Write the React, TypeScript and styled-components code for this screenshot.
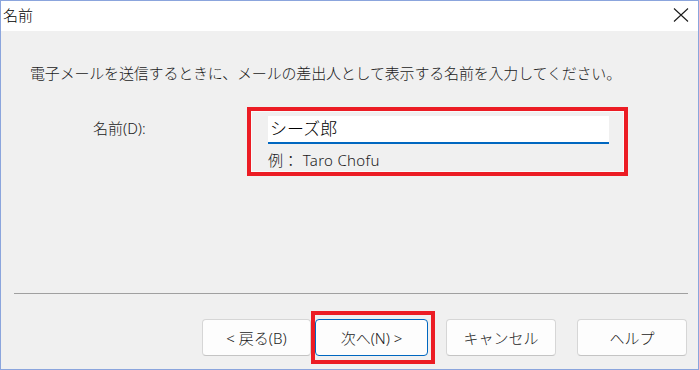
import * as React from "react";
import styled, { createGlobalStyle } from "styled-components";

const GlobalStyle = createGlobalStyle`
  html, body {
    margin: 0;
    padding: 0;
    background: #ffffff;
  }
  body {
    font-family: "Noto Sans", "Noto Sans CJK JP", sans-serif;
    font-weight: 300;
    color: #000000;
  }
`;

const App: React.FC = () => {
  return (
    <>
      <GlobalStyle />
      <Window>
        <TitleBar>
          <Title>名前</Title>
          <CloseButton aria-label="閉じる">
            <svg width="16" height="14" viewBox="0 0 16 14">
              <path d="M1 0.5 L15 13.5 M15 0.5 L1 13.5" stroke="#1a1a1a" strokeWidth="1.1" fill="none" />
            </svg>
          </CloseButton>
        </TitleBar>
        <Body>
          <Instruction>
            電子メールを送信するときに、メールの差出人として表示する名前を入力してください。
          </Instruction>
          <FieldRow>
            <Label>名前(D):</Label>
            <Highlight>
              <NameInput defaultValue="シーズ郎" readOnly />
              <Example>例：&nbsp;Taro Chofu</Example>
            </Highlight>
          </FieldRow>
          <Separator />
          <ButtonRow>
            <Button $width={109}>&lt; 戻る(B)</Button>
            <ButtonHighlight>
              <Button $width={113} $primary>
                次へ(N) &gt;
              </Button>
            </ButtonHighlight>
            <Button $width={110} $gap={11}>
              キャンセル
            </Button>
            <Button $width={110} $gap={21}>
              ヘルプ
            </Button>
          </ButtonRow>
        </Body>
      </Window>
    </>
  );
};

const Window = styled.div`
  width: 699px;
  height: 370px;
  box-sizing: border-box;
  border: 1px solid #8ba5dd;
  display: flex;
  flex-direction: column;
  background: #f0f0f0;
`;

const TitleBar = styled.div`
  height: 30px;
  flex: none;
  background: #ffffff;
  display: flex;
  align-items: center;
  justify-content: space-between;
  padding: 0 9px 0 2px;
`;

const Title = styled.span`
  font-size: 15px;
  line-height: 20px;
  margin-top: -2px;
`;

const CloseButton = styled.span`
  display: flex;
  align-items: center;
  margin-top: -2px;
`;

const Body = styled.div`
  flex: 1;
  display: flex;
  flex-direction: column;
  background: #f0f0f0;
  padding-bottom: 5px;
`;

const Instruction = styled.div`
  margin: 32px 0 0 29px;
  font-size: 15px;
  line-height: 20px;
  letter-spacing: -0.18px;
  color: #1a1a1a;
  white-space: nowrap;
`;

const FieldRow = styled.div`
  display: grid;
  grid-template-columns: 154px 381px;
  margin: 24px 0 0 92px;
  align-items: start;
`;

const Label = styled.span`
  font-size: 15px;
  line-height: 20px;
  margin-top: 11px;
  color: #1a1a1a;
`;

const Highlight = styled.div`
  box-sizing: border-box;
  height: 69px;
  border: 4px solid #ec1c24;
  box-shadow: inset 0 0 0 1px #fafafa;
  padding: 5px 0 0 17px;
  display: flex;
  flex-direction: column;
`;

const NameInput = styled.input`
  box-sizing: border-box;
  width: 341px;
  height: 28px;
  border: none;
  border-bottom: 2px solid #0067c0;
  background: #ffffff;
  padding: 0 0 3px 2px;
  font-family: "Noto Sans CJK JP", sans-serif;
  font-weight: 300;
  font-size: 17px;
  color: #000000;
  outline: none;
`;

const Example = styled.span`
  margin-top: 6px;
  font-size: 15px;
  line-height: 20px;
  letter-spacing: 0.3px;
  color: #1a1a1a;
`;

const Separator = styled.div`
  margin: auto 10px 0 13px;
  height: 1px;
  background: #a0a0a0;
`;

const ButtonRow = styled.div`
  margin-top: 17px;
  height: 53px;
  display: flex;
  align-items: center;
  justify-content: flex-end;
  padding-right: 11px;
`;

const ButtonHighlight = styled.div`
  box-sizing: border-box;
  height: 53px;
  border: 4px solid #ec1c24;
  padding: 4px 3px 4px 0;
  display: flex;
  align-items: center;
`;

const Button = styled.div<{ $width: number; $primary?: boolean; $gap?: number }>`
  box-sizing: border-box;
  width: ${(p) => p.$width}px;
  height: 37px;
  margin-left: ${(p) => p.$gap ?? 0}px;
  display: flex;
  align-items: center;
  justify-content: center;
  background: #fdfdfd;
  border: 1px solid ${(p) => (p.$primary ? "#0067c0" : "#d6d6d6")};
  border-bottom-color: ${(p) => (p.$primary ? "#0067c0" : "#c4c4c4")};
  border-radius: 4px;
  font-size: 15px;
  color: #1b1b1b;
  white-space: nowrap;
`;

export default App;
